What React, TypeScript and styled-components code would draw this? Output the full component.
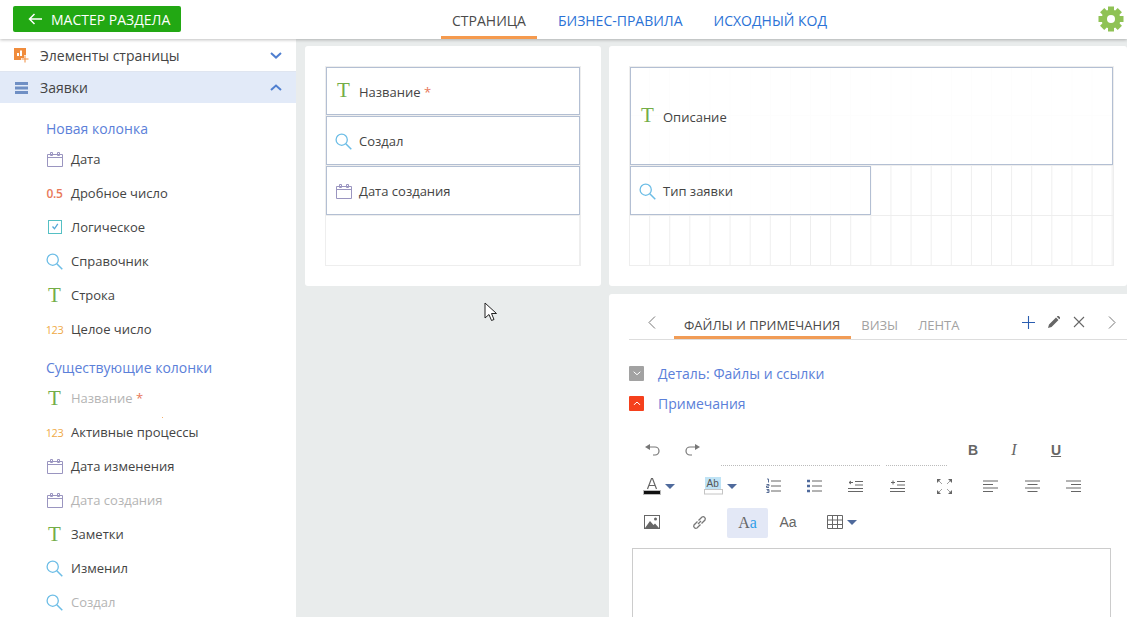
import React from 'react';
import styled, { createGlobalStyle } from 'styled-components';

const GlobalStyle = createGlobalStyle`
  html, body {
    margin: 0;
    padding: 0;
    background: #e9ecec;
    font-family: 'Open Sans', 'Liberation Sans', sans-serif;
    font-size: 13px;
    color: #444;
    overflow: hidden;
  }
  * { box-sizing: border-box; }
`;

const Page = styled.div`
  position: relative;
  width: 1127px;
  height: 617px;
  overflow: hidden;
  display: flex;
  flex-direction: column;
`;

const Header = styled.header`
  position: relative;
  z-index: 2;
  flex: none;
  height: 39px;
  display: flex;
  align-items: flex-start;
  padding: 0 3px 0 13px;
  background: #fff;
  box-shadow: 0 1px 3px rgba(0, 0, 0, 0.25);
`;

const BackButton = styled.div`
  width: 168px;
  height: 26px;
  margin-top: 6px;
  display: flex;
  align-items: center;
  gap: 9px;
  padding-left: 15px;
  background: #22a813;
  border-radius: 2px;
  color: #fff;
  font-size: 14px;
  white-space: nowrap;
`;

const Tabs = styled.nav`
  display: flex;
  margin-left: 260px;
  height: 39px;
`;

const Tab = styled.div<{ $active?: boolean }>`
  height: 39px;
  padding: 12px 11px 0;
  margin-right: ${(p) => (p.$active ? '10px' : '9px')};
  font-size: 14px;
  line-height: 18px;
  white-space: nowrap;
  color: ${(p) => (p.$active ? '#4a4a4a' : '#2b72d6')};
  border-bottom: 3px solid ${(p) => (p.$active ? '#f59a4e' : 'transparent')};
`;

const GearSlot = styled.div`
  margin-left: auto;
  padding-top: 6px;
`;

const Body = styled.div`
  flex: 1;
  min-height: 0;
  display: flex;
`;

const Sidebar = styled.aside`
  position: relative;
  flex: none;
  width: 296px;
  background: #fff;
`;

const SectionHead = styled.div<{ $open?: boolean }>`
  height: ${(p) => (p.$open ? '31px' : '33px')};
  display: flex;
  align-items: center;
  padding: ${(p) => (p.$open ? '0' : '1px')} 14px 0;
  gap: 11px;
  font-size: 14px;
  background: ${(p) => (p.$open ? '#e2eaf8' : '#fff')};
  border-bottom: ${(p) => (p.$open ? 'none' : '1px solid #dfe5f0')};
`;

const SectionTitle = styled.span`
  flex: 1;
`;

const ColumnList = styled.div`
  padding: 14px 0 0 46px;
`;

const GroupTitle = styled.div<{ $spaced?: boolean }>`
  height: 24px;
  line-height: 24px;
  margin: ${(p) => (p.$spaced ? '10px' : '0')} 0 1px;
  font-size: 14px;
  color: #5b80d9;
`;

const ColumnRow = styled.div`
  height: 34px;
  display: flex;
  align-items: center;
  gap: 8px;
`;

const IconBox = styled.span`
  flex: none;
  width: 17px;
  display: flex;
  align-items: center;
  justify-content: center;
`;

const ColumnLabel = styled.span<{ $muted?: boolean }>`
  color: ${(p) => (p.$muted ? '#b4b4b4' : '#444')};
  white-space: nowrap;
`;

const Star = styled.span`
  color: #e8795a;
`;

const TypeT = styled.span`
  font-family: 'Liberation Serif', serif;
  font-size: 21px;
  line-height: 18px;
  color: #74ad48;
`;

const FieldT = styled(TypeT)`
  margin-top: -4px;
`;

const TypeDecimal = styled.span`
  font-size: 12px;
  font-weight: 600;
  letter-spacing: -0.3px;
  color: #e8795a;
`;

const TypeInt = styled.span`
  font-size: 11px;
  letter-spacing: -0.4px;
  color: #efaa48;
`;

const Speck = styled.i`
  position: absolute;
  left: 162px;
  top: 378px;
  width: 1px;
  height: 1px;
  background: #f5b06e;
`;

const Main = styled.main`
  position: relative;
  flex: 1;
  min-width: 0;
  display: grid;
  grid-template-columns: 296px 1fr;
  grid-template-rows: 240px 1fr;
  gap: 8px;
  padding: 7px 0 0 9px;
`;

const Card = styled.section`
  background: #fff;
  border-radius: 3px;
  padding: 20px;
  min-width: 0;
`;

const Canvas = styled.div<{ $columns: number; $width: number }>`
  width: ${(p) => p.$width}px;
  height: 200px;
  display: grid;
  grid-template-columns: repeat(${(p) => p.$columns}, 1fr);
  grid-template-rows: 49px 50px 50px 49px;
  border: 1px solid #eee;
  background-image: linear-gradient(to left, #eee 1px, transparent 1px),
    linear-gradient(to top, #eee 1px, transparent 1px);
  background-size: calc(100% / ${(p) => p.$columns}) 50px;
  background-position: 0 -1px;
`;

const Field = styled.div<{ $col: number; $rows?: number; $trim?: boolean }>`
  grid-column: span ${(p) => p.$col};
  grid-row: span ${(p) => p.$rows ?? 1};
  margin: 0 ${(p) => (p.$trim ? '1px' : '0')} 1px 0;
  display: flex;
  align-items: center;
  gap: 7px;
  padding: 1px 0 0 8px;
  background: rgba(255, 255, 255, 0.85);
  border: 1px solid #b3bfd3;
`;

const DetailCard = styled.section`
  grid-column: 2;
  background: #fff;
  border-radius: 3px 0 0 0;
  padding-left: 20px;
  min-width: 0;
`;

const DetailTabs = styled.div`
  height: 46px;
  display: flex;
  align-items: flex-end;
  border-bottom: 1px solid #ddd;
`;

const PrevSlot = styled.div`
  width: 45px;
  height: 44px;
  display: flex;
  align-items: center;
  justify-content: center;
  padding-top: 10px;
`;

const DetailTab = styled.div<{ $active?: boolean }>`
  height: 24px;
  padding: 0 ${(p) => (p.$active ? '11px' : '10px')} 0 10px;
  line-height: 21px;
  font-size: 13px;
  white-space: nowrap;
  color: ${(p) => (p.$active ? '#4a4a4a' : '#a2a2a2')};
  border-bottom: 3px solid ${(p) => (p.$active ? '#f19c56' : 'transparent')};
`;

const Actions = styled.div`
  margin-left: auto;
  display: flex;
  align-items: center;
  height: 44px;
  padding-top: 10px;
`;

const ActionSlot = styled.div`
  width: 25px;
  display: flex;
  justify-content: center;
`;

const NextSlot = styled.div`
  width: 36px;
  display: flex;
  justify-content: flex-end;
  padding-right: 11px;
`;

const DetailRows = styled.div`
  padding-top: 18px;
`;

const DetailRow = styled.div`
  height: 30px;
  display: flex;
  align-items: center;
  gap: 14px;
`;

const Toggle = styled.span<{ $open?: boolean }>`
  width: 15px;
  height: 15px;
  border-radius: 1px;
  display: flex;
  align-items: center;
  justify-content: center;
  background: ${(p) => (p.$open ? '#f5401c' : '#a2a2a2')};
`;

const DetailLink = styled.span`
  font-size: 14px;
  color: #5b80d9;
`;

const Toolbar = styled.div`
  margin: 14px 0 8px 3px;
`;

const ToolRow = styled.div`
  height: 36px;
  display: flex;
  align-items: center;
`;

const Tool = styled.div<{ $w: number; $active?: boolean }>`
  flex: none;
  width: ${(p) => p.$w}px;
  height: 30px;
  margin-top: ${(p) => (p.$active ? '2px' : '0')};
  display: flex;
  align-items: center;
  justify-content: center;
  gap: 4px;
  border-radius: 2px;
  background: ${(p) => (p.$active ? '#e3e8f6' : 'transparent')};
`;

const ToolText = styled.span<{ $serif?: boolean; $bold?: boolean; $italic?: boolean; $under?: boolean }>`
  font-family: ${(p) => (p.$serif ? "'Liberation Serif', serif" : "'Liberation Sans', sans-serif")};
  font-size: ${(p) => (p.$serif ? '16px' : '14px')};
  font-weight: ${(p) => (p.$bold ? 700 : 400)};
  font-style: ${(p) => (p.$italic ? 'italic' : 'normal')};
  text-decoration: ${(p) => (p.$under ? 'underline' : 'none')};
  color: #666;
`;

const AccentLetter = styled.span`
  color: #2f9fe8;
`;

const DottedField = styled.div<{ $w: number; $gap: number }>`
  flex: none;
  width: ${(p) => p.$w}px;
  height: 14px;
  margin: 18px 0 0 ${(p) => p.$gap}px;
  border-bottom: 1px dotted #bbb;
`;

const Editor = styled.div`
  width: 479px;
  height: 120px;
  margin-left: 3px;
  border: 1px solid #ccc;
`;

const CursorMark = styled.svg`
  position: absolute;
  left: 188px;
  top: 263px;
`;

const Search = () => (
  <svg width="17" height="17" viewBox="0 0 17 17" fill="none" stroke="#6cbde6" strokeWidth="1.3">
    <circle cx="6.7" cy="6.7" r="5.6" />
    <path d="M10.8 10.8L16.3 16.3" strokeWidth="1.5" />
  </svg>
);

const Calendar = () => (
  <svg width="16" height="15" viewBox="0 0 16 15" fill="none" stroke="#9a95c0" strokeWidth="1">
    <path d="M.5 2.5h15v12H.5zM.5 5.5h15M3.5.5h2v3h-2zM10.5.5h2v3h-2zM5.5 2.5h5" />
  </svg>
);

const Check = () => (
  <svg width="14" height="14" viewBox="0 0 14 14" fill="none">
    <rect x=".5" y=".5" width="13" height="13" stroke="#55c0c4" />
    <path d="M4.5 6.5L6.5 8.8L9.8 3.8" stroke="#55a8d8" strokeWidth="1.3" />
  </svg>
);

const ElementsIcon = () => (
  <svg width="15" height="15" viewBox="0 0 15 15">
    <rect width="12" height="12" fill="#f08c3c" />
    <path d="M3 5h2v3H3zM6 2.5h2V8H6z" fill="#fff" />
    <path d="M7 10h8v2H7zM10 7h2v8h-2z" fill="#fff" />
    <path d="M11 7.5v7M7.5 11h7" stroke="#f08c3c" />
  </svg>
);

const BarsIcon = () => (
  <svg width="15" height="12" viewBox="-1 0 15 12" fill="#6f8fc4">
    <rect width="13" height="3" />
    <rect y="4.5" width="13" height="3" />
    <rect y="9" width="13" height="3" />
  </svg>
);

const Chevron = ({ up, color = '#4f7fd0', size = 12, weight = 2 }: { up?: boolean; color?: string; size?: number; weight?: number }) => (
  <svg width={size} height={size * 0.6} viewBox="0 0 12 7" fill="none" stroke={color} strokeWidth={weight}>
    <path d={up ? 'M1 6L6 1.5L11 6' : 'M1 1L6 5.5L11 1'} />
  </svg>
);

const SideArrow = ({ left }: { left?: boolean }) => (
  <svg width="8" height="13" viewBox="0 0 8 13" fill="none" stroke="#777">
    <path d={left ? 'M7 .5L1 6.5L7 12.5' : 'M1 .5L7 6.5L1 12.5'} />
  </svg>
);

const Gear = () => {
  const teeth = [0, 45, 90, 135];
  return (
    <svg width="26" height="26" viewBox="0 0 26 26">
      <g fill="#8fc255">
        {teeth.map((a) => (
          <rect key={a} x="10" y="0.5" width="6" height="25" transform={`rotate(${a} 13 13)`} />
        ))}
        <circle cx="13" cy="13" r="9.5" />
      </g>
      <circle cx="13" cy="13" r="4" fill="#fff" />
    </svg>
  );
};

const Lines = ({ d }: { d: string }) => (
  <svg width="15" height="14" viewBox="0 0 15 14" fill="none" stroke="#666">
    <path d={d} />
  </svg>
);

const OrderedList = () => (
  <svg width="15" height="16" viewBox="0 0 15 16" fill="none">
    <path d="M5 3h10M5 8h10M5 13h10" stroke="#666" />
    <path d="M1 1h1.5v3.5M.5 6.5h2.500v1.5H.5v1.500h2.500M.5 11.500h2.500v1.300H1M3 12.800v1.700H.5" stroke="#5a6f96" />
  </svg>
);

const BulletList = () => (
  <svg width="15" height="14" viewBox="0 0 15 14" fill="none">
    <path d="M5 2h10M5 7h10M5 12h10" stroke="#666" />
    <path d="M0 2h3M0 7h3M0 12h3" stroke="#4f6a9c" strokeWidth="2.4" />
  </svg>
);

const Caret = () => (
  <svg width="10" height="5" viewBox="0 0 10 5">
    <path d="M0 0h10L5 5z" fill="#4f6a9c" />
  </svg>
);

const FontColor = () => (
  <svg width="18" height="18" viewBox="0 0 18 18" fill="none">
    <path d="M4.5 12L8.5 1.5h1L13.5 12M6 8.5h6" stroke="#666" strokeWidth="1.2" />
    <rect x=".5" y="13.5" width="17" height="4" fill="#111" stroke="#bbb" />
  </svg>
);

const Highlight = () => (
  <svg width="19" height="18" viewBox="0 0 19 18">
    <rect x="1" width="16" height="12" fill="#bfe3f5" />
    <rect x=".5" y="12.5" width="18" height="4.5" fill="#fff" stroke="#c4c4c4" />
  </svg>
);

const AbMark = styled.span`
  position: absolute;
  left: 3px;
  top: 1px;
  font-family: 'Liberation Sans', sans-serif;
  font-size: 10px;
  line-height: 11px;
  color: #555;
`;

const HighlightBox = styled.span`
  position: relative;
  display: flex;
`;

const Picture = () => (
  <svg width="16" height="14" viewBox="0 0 16 14">
    <rect x=".5" y=".5" width="15" height="13" fill="#fff" stroke="#666" />
    <path d="M1 13L6 6L9.5 10L11 8.5L15 13z" fill="#666" />
    <circle cx="11.5" cy="4" r="1.5" fill="#666" />
  </svg>
);

const LinkIcon = () => (
  <svg width="15" height="15" viewBox="0 0 15 15" fill="none" stroke="#777" strokeWidth="1.3">
    <path d="M6 9L9 6" />
    <path d="M5.5 6.5L2 10a2.2 2.2 0 0 0 3 3L8.5 9.5" />
    <path d="M6.5 5.5L10 2a2.2 2.2 0 0 1 3 3L9.5 8.5" />
  </svg>
);

const TableIcon = () => (
  <svg width="16" height="14" viewBox="0 0 16 14" fill="none" stroke="#666">
    <path d="M.5.5h15v13H.5zM.5 5h15M.5 9.5h15M5.5.5v13M10.5.5v13" />
  </svg>
);

const Expand = () => (
  <svg width="15" height="15" viewBox="0 0 15 15" fill="#666" stroke="#888" strokeWidth=".8">
    <path d="M0 0h4L0 4zM15 0v4L11 0zM0 15v-4l4 4zM15 15h-4l4-4z" stroke="none" />
    <path d="M2 2l3 3M13 2l-3 3M2 13l3-3M13 13l-3-3" fill="none" />
  </svg>
);

const Undo = ({ flip }: { flip?: boolean }) => (
  <svg width="15" height="12" viewBox="0 0 15 12" fill="none" style={flip ? { transform: 'scaleX(-1)' } : undefined}>
    <path d="M5 0v6L0 3z" fill="#777" />
    <path d="M4 3h6a4 4 0 0 1 0 8H8" stroke="#777" strokeWidth="1.2" />
  </svg>
);

type ColumnType = 'date' | 'decimal' | 'bool' | 'lookup' | 'text' | 'int';

const typeIcons: Record<ColumnType, React.ReactNode> = {
  date: <Calendar />,
  decimal: <TypeDecimal>0.5</TypeDecimal>,
  bool: <Check />,
  lookup: <Search />,
  text: <TypeT>T</TypeT>,
  int: <TypeInt>123</TypeInt>,
};

const newColumns: { type: ColumnType; label: string }[] = [
  { type: 'date', label: 'Дата' },
  { type: 'decimal', label: 'Дробное число' },
  { type: 'bool', label: 'Логическое' },
  { type: 'lookup', label: 'Справочник' },
  { type: 'text', label: 'Строка' },
  { type: 'int', label: 'Целое число' },
];

const existingColumns: { type: ColumnType; label: string; muted?: boolean; required?: boolean }[] = [
  { type: 'text', label: 'Название', muted: true, required: true },
  { type: 'int', label: 'Активные процессы' },
  { type: 'date', label: 'Дата изменения' },
  { type: 'date', label: 'Дата создания', muted: true },
  { type: 'text', label: 'Заметки' },
  { type: 'lookup', label: 'Изменил' },
  { type: 'lookup', label: 'Создал', muted: true },
];

const App: React.FC = () => {
  return (
    <Page>
      <GlobalStyle />
      <Header>
        <BackButton>
          <svg width="14" height="12" viewBox="0 0 14 12" fill="none" stroke="#fff" strokeWidth="1.5">
            <path d="M14 6H1.5M6.5 1L1.5 6L6.5 11" />
          </svg>
          МАСТЕР РАЗДЕЛА
        </BackButton>
        <Tabs>
          <Tab $active>СТРАНИЦА</Tab>
          <Tab>БИЗНЕС-ПРАВИЛА</Tab>
          <Tab>ИСХОДНЫЙ КОД</Tab>
        </Tabs>
        <GearSlot>
          <Gear />
        </GearSlot>
      </Header>
      <Body>
        <Sidebar>
          <SectionHead>
            <ElementsIcon />
            <SectionTitle>Элементы страницы</SectionTitle>
            <Chevron />
          </SectionHead>
          <SectionHead $open>
            <BarsIcon />
            <SectionTitle>Заявки</SectionTitle>
            <Chevron up />
          </SectionHead>
          <ColumnList>
            <GroupTitle>Новая колонка</GroupTitle>
            {newColumns.map((c) => (
              <ColumnRow key={c.label}>
                <IconBox>{typeIcons[c.type]}</IconBox>
                <ColumnLabel>{c.label}</ColumnLabel>
              </ColumnRow>
            ))}
            <GroupTitle $spaced>Существующие колонки</GroupTitle>
            {existingColumns.map((c) => (
              <ColumnRow key={c.label}>
                <IconBox>{typeIcons[c.type]}</IconBox>
                <ColumnLabel $muted={c.muted}>
                  {c.label}
                  {c.required && <Star> *</Star>}
                </ColumnLabel>
              </ColumnRow>
            ))}
          </ColumnList>
          <Speck />
        </Sidebar>
        <Main>
          <Card>
            <Canvas $columns={1} $width={256}>
              <Field $col={1}>
                <IconBox><FieldT>T</FieldT></IconBox>
                <ColumnLabel>
                  Название<Star> *</Star>
                </ColumnLabel>
              </Field>
              <Field $col={1}>
                <IconBox>{typeIcons.lookup}</IconBox>
                <ColumnLabel>Создал</ColumnLabel>
              </Field>
              <Field $col={1}>
                <IconBox>{typeIcons.date}</IconBox>
                <ColumnLabel>Дата создания</ColumnLabel>
              </Field>
            </Canvas>
          </Card>
          <Card>
            <Canvas $columns={24} $width={485}>
              <Field $col={24} $rows={2}>
                <IconBox><FieldT>T</FieldT></IconBox>
                <ColumnLabel>Описание</ColumnLabel>
              </Field>
              <Field $col={12} $trim>
                <IconBox>{typeIcons.lookup}</IconBox>
                <ColumnLabel>Тип заявки</ColumnLabel>
              </Field>
            </Canvas>
          </Card>
          <DetailCard>
            <DetailTabs>
              <PrevSlot>
                <SideArrow left />
              </PrevSlot>
              <DetailTab $active>ФАЙЛЫ И ПРИМЕЧАНИЯ</DetailTab>
              <DetailTab>ВИЗЫ</DetailTab>
              <DetailTab>ЛЕНТА</DetailTab>
              <Actions>
                <ActionSlot>
                  <svg width="13" height="13" viewBox="0 0 13 13" stroke="#2a5db0" strokeWidth="1.1">
                    <path d="M6.5 0v13M0 6.5h13" />
                  </svg>
                </ActionSlot>
                <ActionSlot>
                  <svg width="12" height="12" viewBox="0 0 12 12" fill="#666">
                    <path d="M0 12L1 8.5L8 1.5L10.5 4L3.5 11zM8.800.7L9.5 0a1 1 0 0 1 1.2 0L12 1.3a1 1 0 0 1 0 1.2L11.3 3.2z" />
                  </svg>
                </ActionSlot>
                <ActionSlot>
                  <svg width="12" height="12" viewBox="0 0 12 12" stroke="#666" strokeWidth="1.1">
                    <path d="M1 1l10 10M11 1L1 11" />
                  </svg>
                </ActionSlot>
                <NextSlot>
                  <SideArrow />
                </NextSlot>
              </Actions>
            </DetailTabs>
            <DetailRows>
              <DetailRow>
                <Toggle>
                  <Chevron color="#fff" size={8} weight={1.5} />
                </Toggle>
                <DetailLink>Деталь: Файлы и ссылки</DetailLink>
              </DetailRow>
              <DetailRow>
                <Toggle $open>
                  <Chevron up color="#fff" size={8} weight={1.5} />
                </Toggle>
                <DetailLink>Примечания</DetailLink>
              </DetailRow>
            </DetailRows>
            <Toolbar>
              <ToolRow>
                <Tool $w={41}><Undo /></Tool>
                <Tool $w={39}><Undo flip /></Tool>
                <DottedField $w={159} $gap={9} />
                <DottedField $w={61} $gap={6} />
                <Tool $w={52}><ToolText $bold>B</ToolText></Tool>
                <Tool $w={30}><ToolText $serif $italic>I</ToolText></Tool>
                <Tool $w={54}><ToolText $bold $under>U</ToolText></Tool>
              </ToolRow>
              <ToolRow>
                <Tool $w={54}><FontColor /><Caret /></Tool>
                <Tool $w={68}>
                  <HighlightBox>
                    <Highlight />
                    <AbMark>Ab</AbMark>
                  </HighlightBox>
                  <Caret />
                </Tool>
                <Tool $w={38}><OrderedList /></Tool>
                <Tool $w={44}><BulletList /></Tool>
                <Tool $w={38}><Lines d="M7 2.5h8M7 6h8M0 9.5h15M0 12.5h15M1 3.5h4M1 3.5L3 2M1 3.5L3 5" /></Tool>
                <Tool $w={46}><Lines d="M7 2.5h8M7 6h8M0 9.5h15M0 12.5h15M1 3.5h4M3 1.5v4" /></Tool>
                <Tool $w={48}><Expand /></Tool>
                <Tool $w={44}><Lines d="M0 2h15M0 5.5h10M0 9h15M0 12.5h10" /></Tool>
                <Tool $w={40}><Lines d="M0 2h15M2.5 5.5h10M0 9h15M2.5 12.5h10" /></Tool>
                <Tool $w={42}><Lines d="M0 2h15M5 5.5h10M0 9h15M5 12.5h10" /></Tool>
              </ToolRow>
              <ToolRow>
                <Tool $w={40}><Picture /></Tool>
                <Tool $w={55}><LinkIcon /></Tool>
                <Tool $w={41} $active>
                  <ToolText $serif>
                    A<AccentLetter>a</AccentLetter>
                  </ToolText>
                </Tool>
                <Tool $w={40}><ToolText>Aa</ToolText></Tool>
                <Tool $w={68}><TableIcon /><Caret /></Tool>
              </ToolRow>
            </Toolbar>
            <Editor />
          </DetailCard>
          <CursorMark width="14" height="20" viewBox="0 0 14 20">
            <path d="M1 1v15l4-3.5l2.5 6l2.5-1l-2.5-6h5z" fill="#fff" stroke="#222" />
          </CursorMark>
        </Main>
      </Body>
    </Page>
  );
};

export default App;
